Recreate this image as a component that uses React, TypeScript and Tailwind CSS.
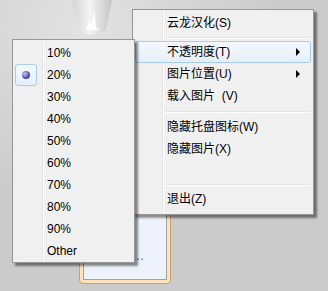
import { ReactNode } from 'react'

const font = { fontFamily: '"Liberation Sans", "Noto Sans CJK SC", sans-serif' }

function Separator({ h = 9 }: { h?: number }) {
  const height = h === 7 ? 'h-[7px]' : h === 6 ? 'h-[6px]' : 'h-[9px]'
  return (
    <div className={'flex items-center pl-[30px] pr-[1px] ' + height}>
      <div className="w-full">
        <div className="h-px bg-[#e2e3e3]" />
        <div className="h-px bg-white" />
      </div>
    </div>
  )
}

function Item({
  label,
  active,
  arrow,
  checked,
}: {
  label?: ReactNode
  active?: boolean
  arrow?: boolean
  checked?: boolean
}) {
  return (
    <div
      className={
        'relative flex h-[22px] items-center rounded-[3px] border pl-[31px] text-[12px] text-black ' +
        (active
          ? 'border-[#a8cdf3] bg-gradient-to-b from-[#f4f8fd] to-[#e6effa]'
          : 'border-transparent')
      }
    >
      {checked && (
        <div className="absolute left-[-1px] top-[-1px] flex h-[22px] w-[22px] items-center justify-center rounded-[3px] border border-[#a8cdf3] bg-gradient-to-b from-[#f4f8fd] to-[#e6effa]">
          <div className="h-[8px] w-[8px] rounded-full bg-[radial-gradient(circle_at_35%_35%,#c3c7f0,#4a4fa8_60%,#2b2f7a)]" />
        </div>
      )}
      <span className="whitespace-pre leading-none">{label}</span>
      {arrow && (
        <div className="absolute right-[10px] top-[6px] h-0 w-0 border-y-[4px] border-l-[4px] border-y-transparent border-l-black" />
      )}
    </div>
  )
}

function Menu({ className, children }: { className: string; children: ReactNode }) {
  return (
    <div
      className={
        'absolute border border-[#979797] bg-[#f0f0f0] p-[2px] shadow-[3px_3px_2px_rgba(0,0,0,0.45)] ' +
        className
      }
    >
      <div className="absolute bottom-[2px] left-[29px] top-[2px] flex">
        <div className="w-px bg-[#e2e3e3]" />
        <div className="w-px bg-white" />
      </div>
      <div className="relative">{children}</div>
    </div>
  )
}

export default function App() {
  const levels = ['10%', '20%', '30%', '40%', '50%', '60%', '70%', '80%', '90%', 'Other']

  return (
    <div
      className="relative h-[291px] w-[328px] overflow-hidden bg-[#cbcbcb]"
      style={font}
    >
      {/* desktop wallpaper */}
      <svg className="absolute left-0 top-0" width="328" height="291">
        <defs>
          <radialGradient id="glow" cx="0.25" cy="0.1" r="0.6">
            <stop offset="0" stopColor="#e2e2e2" />
            <stop offset="1" stopColor="#cbcbcb" />
          </radialGradient>
          <linearGradient id="lamp" x1="0" y1="0" x2="1" y2="0">
            <stop offset="0" stopColor="#d4d4d4" />
            <stop offset="0.45" stopColor="#f4f4f4" />
            <stop offset="1" stopColor="#c4c4c4" />
          </linearGradient>
        </defs>
        <rect width="328" height="291" fill="url(#glow)" />
        <path d="M0 70 L60 0" stroke="#dadada" strokeWidth="1" />
        <path d="M100 36 L132 6" stroke="#e6e6e6" strokeWidth="1" />
        <path d="M72 0 L112 0 L106 30 Q92 38 80 32 Z" fill="url(#lamp)" />
        <path d="M86 30 L90 20 L92 26 L94 10 L96 28 L100 30 Z" fill="#ffffff" />
      </svg>

      {/* window behind menus */}
      <div className="absolute left-[79px] top-[196px] h-[88px] w-[92px] rounded-[4px] border border-[#c9a26a] bg-[#fbe3bb] p-[3px]">
        <div className="flex h-full flex-col border border-[#9aa3ad] bg-white">
          <div className="h-[18px] bg-white" />
          <div className="flex flex-1 items-center justify-end bg-[#eef3fb] pr-[22px] pt-[14px]">
            <span className="text-[12px] leading-none text-[#1f5fbf]">…</span>
          </div>
        </div>
      </div>

      {/* main context menu */}
      <Menu className="left-[132px] top-[9px] h-[206px] w-[182px]">
        <Item label="云龙汉化(S)" />
        <Separator h={7} />
        <Item label="不透明度(T)" active arrow />
        <Item label="图片位置(U)" arrow />
        <Item label="载入图片  (V)" />
        <Separator />
        <Item label="隐藏托盘图标(W)" />
        <Item label="隐藏图片(X)" />
        <div className="h-[22px]" />
        <Separator h={6} />
        <Item label="退出(Z)" />
      </Menu>

      {/* opacity submenu */}
      <Menu className="left-[12px] top-[39px] h-[224px] w-[123px]">
        {levels.map((l) => (
          <Item key={l} label={l} checked={l === '20%'} />
        ))}
      </Menu>
    </div>
  )
}
